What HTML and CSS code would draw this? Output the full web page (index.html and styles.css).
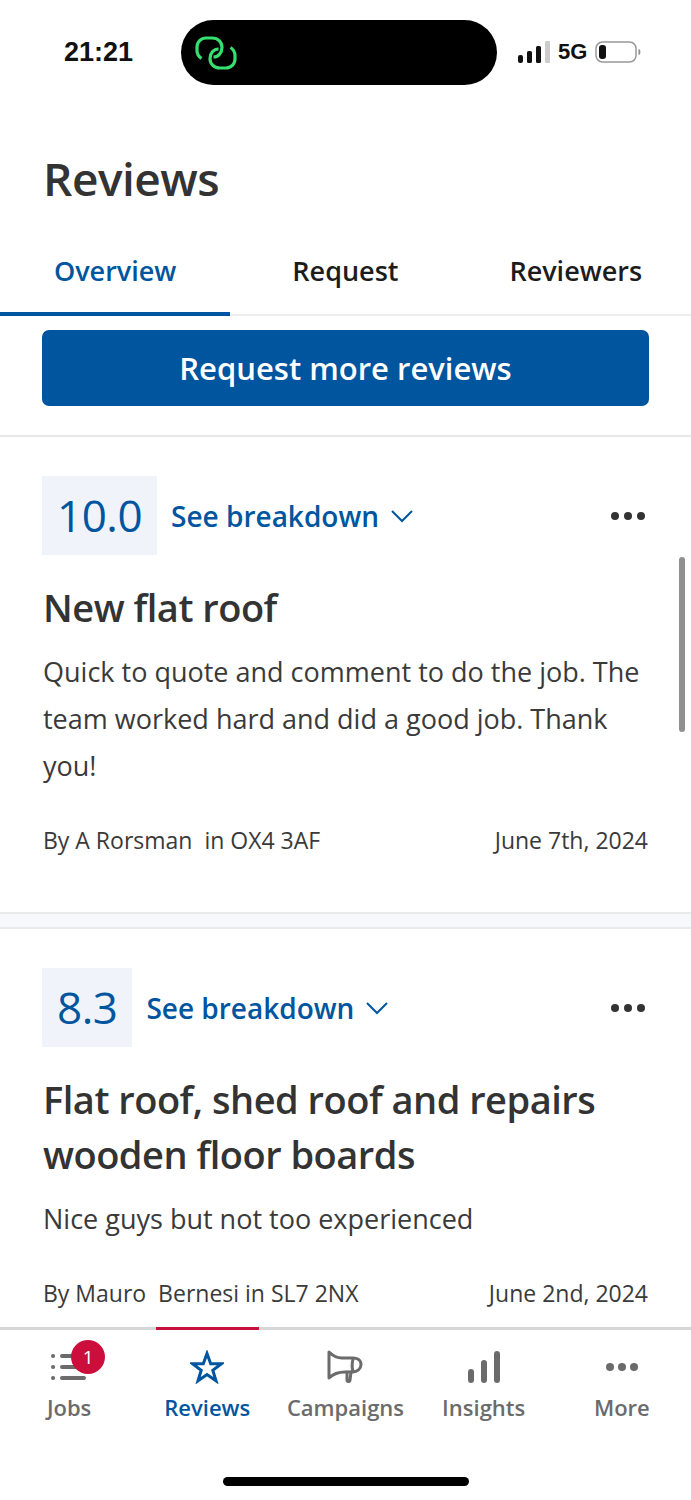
FILE: index.html
```html
<!DOCTYPE html>
<html lang="en">
<head>
<meta charset="utf-8">
<title>Reviews</title>
<link rel="stylesheet" href="styles.css">
</head>
<body>
<div class="app">
  <div class="status">
    <span class="time">21:21</span>
    <div class="island">
      <svg class="link-icon" width="42" height="34" viewBox="0 0 42 34" fill="none" stroke="#35e06f" stroke-width="3.2">
        <path d="M6.5 22.5C3.5 20.5 2 18 2 14.5V11C2 6 6 2 11 2h6c6.500 0 10 4.500 10 9.500 0 5.500-4 9.500-8.500 9.500"/>
        <path d="M35.500 11.500C38.500 13.500 40 16 40 19.500V23c0 5-4 9-9 9h-6c-6.500 0-10-4.500-10-9.500 0-5.500 4-9.500 8.500-9.500"/>
      </svg>
    </div>
    <div class="indicators">
      <svg width="32" height="22" viewBox="0 0 32 22"><rect x="0" y="14" width="5" height="8" rx="2" fill="#111"/><rect x="9" y="10" width="5" height="12" rx="1.500" fill="#111"/><rect x="18" y="5" width="5" height="17" rx="1.500" fill="#111"/><rect x="27" y="0" width="5" height="22" rx="1" fill="#ccc"/></svg>
      <span class="net">5G</span>
      <svg width="46" height="22" viewBox="0 0 46 22"><rect x="1" y="1" width="40" height="20" rx="6.500" fill="none" stroke="#999" stroke-width="1.500"/><rect x="4" y="4" width="7" height="14" rx="3" fill="#111"/><path d="M44 8.500c1.200.6 1.200 4.400 0 5z" fill="#888" stroke="#888"/></svg>
    </div>
  </div>

  <h1 class="page-title">Reviews</h1>

  <nav class="tabs">
    <div class="tab active">Overview</div>
    <div class="tab">Request</div>
    <div class="tab">Reviewers</div>
  </nav>

  <main class="scroll">
    <div class="request-wrap"><div class="btn">Request more reviews</div></div>

    <article class="review">
      <div class="review-head">
        <div class="score">10.0</div>
        <div class="breakdown">See breakdown
          <svg width="24" height="14" viewBox="0 0 24 14" fill="none" stroke="#00559f" stroke-width="2"><path d="M2 2l10 10L22 2"/></svg>
        </div>
        <svg class="dots" width="36" height="10" viewBox="0 0 36 10" fill="#333"><circle cx="5" cy="5" r="4"/><circle cx="18" cy="5" r="4"/><circle cx="31" cy="5" r="4"/></svg>
      </div>
      <h2 class="review-title">New flat roof</h2>
      <p class="review-body">Quick to quote and comment to do the job. The team worked hard and did a good job. Thank you!</p>
      <div class="meta"><span class="by">By A Rorsman&nbsp; in OX4 3AF</span><span>June 7th, 2024</span></div>
    </article>

    <div class="divider"></div>

    <article class="review">
      <div class="review-head">
        <div class="score">8.3</div>
        <div class="breakdown">See breakdown
          <svg width="24" height="14" viewBox="0 0 24 14" fill="none" stroke="#00559f" stroke-width="2"><path d="M2 2l10 10L22 2"/></svg>
        </div>
        <svg class="dots" width="36" height="10" viewBox="0 0 36 10" fill="#333"><circle cx="5" cy="5" r="4"/><circle cx="18" cy="5" r="4"/><circle cx="31" cy="5" r="4"/></svg>
      </div>
      <h2 class="review-title">Flat roof, shed roof and repairs wooden floor boards</h2>
      <p class="review-body">Nice guys but not too experienced</p>
      <div class="meta"><span class="by">By Mauro&nbsp; Bernesi in SL7 2NX</span><span>June 2nd, 2024</span></div>
    </article>

    <div class="scrollbar"></div>
  </main>

  <nav class="bottom">
    <div class="item">
      <div class="icon">
        <svg width="36" height="30" viewBox="0 0 36 30" fill="none" stroke="#6b6b6b" stroke-width="4" stroke-linecap="round"><path d="M2 4h.1M2 15h.1M2 26h.1M11 4h22M11 15h22M11 26h22"/></svg>
        <span class="badge">1</span>
      </div>
      <span>Jobs</span>
    </div>
    <div class="item current">
      <div class="icon">
        <svg width="34" height="34" viewBox="0 0 34 34" fill="none" stroke="#00559f" stroke-width="3" stroke-linejoin="miter"><path d="M17 3.500l3.700 10.300h10.800l-8.700 6.500 3.200 10.500-9-6.300-9 6.300 3.200-10.500-8.700-6.500h10.800z"/></svg>
      </div>
      <span>Reviews</span>
    </div>
    <div class="item">
      <div class="icon">
        <svg width="36" height="34" viewBox="0 0 36 34" fill="none" stroke="#6b6b6b" stroke-width="3" stroke-linejoin="round" stroke-linecap="round"><path d="M2 2v26c3-3 9-6 16-6h8c4 0 8-3 8-7.500S30 8 26 8H15C9 8 5 5 2 2z"/><path d="M26 9c-1 4-1 9 0 12M20 22v8c0 2 3 2 3 0l1-8"/></svg>
      </div>
      <span>Campaigns</span>
    </div>
    <div class="item">
      <div class="icon">
        <svg width="34" height="34" viewBox="0 0 34 34" fill="#6b6b6b"><rect x="1" y="19" width="6" height="14" rx="3"/><rect x="14" y="10" width="6" height="23" rx="3"/><rect x="27" y="1" width="6" height="32" rx="3"/></svg>
      </div>
      <span>Insights</span>
    </div>
    <div class="item">
      <div class="icon">
        <svg width="34" height="10" viewBox="0 0 34 10" fill="#6b6b6b"><circle cx="5" cy="5" r="4"/><circle cx="17" cy="5" r="4"/><circle cx="29" cy="5" r="4"/></svg>
      </div>
      <span>More</span>
    </div>
    <div class="home"></div>
  </nav>
</div>
</body>
</html>
```

FILE: styles.css
```css
* { box-sizing: border-box; }
html, body { margin: 0; padding: 0; background: #fff; }
body { font-family: "Open Sans", "Noto Sans", sans-serif; color: #333; }
.app { width: 691px; height: 1500px; display: flex; flex-direction: column; overflow: hidden; }

.status { height: 104px; flex: none; display: flex; align-items: flex-start; padding-top: 20px; position: relative; }
.time { font-family: "Liberation Sans", sans-serif; font-weight: 700; font-size: 27px; color: #111; width: 181px; padding-left: 64px; line-height: 64px; height: 64px; }
.island { width: 316px; height: 65px; background: #000; border-radius: 33px; display: flex; align-items: center; padding-left: 14px; }
.indicators { display: flex; align-items: center; height: 64px; padding-left: 21px; gap: 8px; }
.net { font-family: "Liberation Sans", sans-serif; font-weight: 700; font-size: 22px; color: #111; }

.page-title { margin: 0; height: 136px; flex: none; padding: 42px 0 0 43px; font-size: 46px; font-weight: 600; line-height: 64px; letter-spacing: -0.5px; color: #333; height: 136px; margin-bottom: 0; }

.tabs { display: flex; flex: none; height: 76px; margin-top: -0px; border-bottom: 2px solid #eee; }
.tab { width: 230.3px; height: 76px; font-size: 27px; font-weight: 600; color: #1c1c1c; text-align: center; line-height: 61px; }
.tab.active { color: #00559f; border-bottom: 4px solid #00559f; }

.scroll { flex: 1; position: relative; overflow: hidden; }
.request-wrap { padding: 14px 42px 29px; border-bottom: 2px solid #e9e9e9; }
.btn { height: 76px; background: #00559f; border-radius: 7px; color: #fff; font-size: 31px; font-weight: 600; text-align: center; line-height: 76px; }

.review { padding: 39px 43px 0 42px; height: 475px; }
.review-head { display: flex; align-items: center; height: 79px; }
.score { height: 79px; padding: 0 15px; background: #f0f4fa; color: #00559f; font-size: 44px; line-height: 79px; letter-spacing: -0.5px; }
.breakdown { margin-left: 14px; display: flex; align-items: center; gap: 11px; color: #00559f; font-size: 28px; font-weight: 600; }
.dots { margin-left: auto; margin-right: 2px; }
.review-title { margin: 25px 0 0 1px; font-size: 38px; font-weight: 600; line-height: 55px; letter-spacing: -0.5px; color: #333; }
.review-body { margin: 13px 0 0 1px; font-size: 27px; line-height: 47px; color: #3a3a3a; }
.meta { display: flex; justify-content: space-between; margin: 35px 0 0 1px; font-size: 23px; line-height: 32px; color: #3a3a3a; }

.divider { height: 17px; background: #f6f8fc; border-top: 2px solid #eaeaea; border-bottom: 2px solid #eaeaea; }

.scrollbar { position: absolute; right: 6px; top: 241px; width: 6px; height: 175px; background: #8f8f8f; border-radius: 3px; }

.bottom { flex: none; height: 173px; position: relative; display: flex; border-top: 3px solid #d6d6d6; }
.bottom::before { content: ""; position: absolute; left: 156px; top: -3px; width: 103px; height: 3px; background: #c8103f; }
.item { width: 138.2px; display: flex; flex-direction: column; align-items: center; font-size: 22px; font-weight: 600; color: #6b6b6b; }
.item.current { color: #00559f; }
.icon { height: 62px; display: flex; align-items: center; justify-content: center; position: relative; padding-top: 12px; }
.badge { position: absolute; left: 20px; top: 10px; width: 34px; height: 34px; border-radius: 50%; background: #cc0e3d; color: #fff; font-size: 19px; font-weight: 400; text-align: center; line-height: 34px; }
.home { position: absolute; left: 223px; top: 147px; width: 246px; height: 9px; border-radius: 5px; background: #000; }
```
